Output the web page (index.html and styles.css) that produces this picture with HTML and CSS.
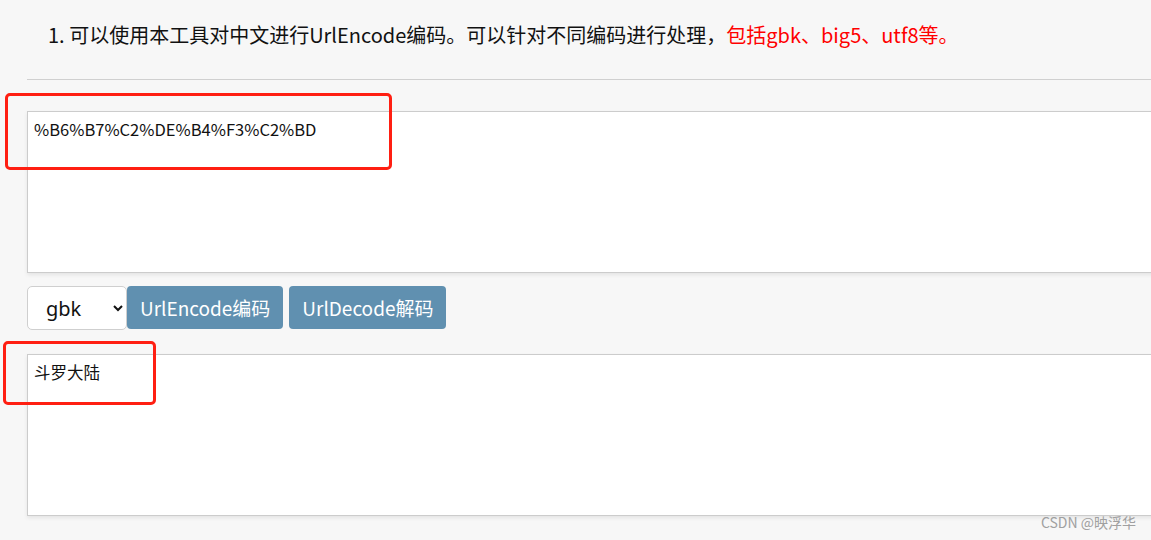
FILE: index.html
```html
<!DOCTYPE html>
<html lang="zh-CN">
<head>
<meta charset="utf-8">
<title>UrlEncode</title>
<link rel="stylesheet" href="styles.css">
</head>
<body>
<div class="page">
  <p class="intro">1. 可以使用本工具对中文进行UrlEncode编码。可以针对不同编码进行处理，<span class="hl">包括gbk、big5、utf8等。</span></p>
  <div class="rule"></div>
  <textarea class="box box-top" readonly>%B6%B7%C2%DE%B4%F3%C2%BD</textarea>
  <div class="controls">
    <select class="enc">
      <option>gbk</option>
      <option>big5</option>
      <option>utf8</option>
    </select>
    <button class="btn">UrlEncode编码</button>
    <button class="btn">UrlDecode解码</button>
  </div>
  <textarea class="box box-bottom" readonly>斗罗大陆</textarea>
  <div class="mark mark-1"></div>
  <div class="mark mark-2"></div>
  <div class="watermark">CSDN @映浮华</div>
</div>
</body>
</html>
```

FILE: styles.css
```css
html, body {
  margin: 0;
  padding: 0;
  background: #f7f7f7;
  overflow: hidden;
}
.page {
  position: relative;
  width: 1151px;
  height: 540px;
  overflow: hidden;
  font-family: "Noto Sans CJK SC", "Noto Sans", sans-serif;
  color: #111;
}
.intro {
  margin: 0;
  padding: 21px 0 0 48px;
  font-size: 20px;
  line-height: 28px;
  height: 56px;
  box-sizing: border-box;
  white-space: nowrap;
}
.hl { color: #f00; }
.rule {
  margin: 23px 0 0 27px;
  height: 0;
  border-top: 1px solid #d0d0d0;
}
.box {
  display: block;
  margin-left: 27px;
  width: 1160px;
  height: 162px;
  box-sizing: border-box;
  border: 1px solid #cccccc;
  background: #fff;
  resize: none;
  outline: none;
  padding: 6px 6px;
  font-family: "Noto Sans CJK SC", "Noto Sans", sans-serif;
  font-size: 16.5px;
  line-height: 22px;
  color: #111;
  box-shadow: 0 2px 4px rgba(0,0,0,0.08);
}
.box-top { margin-top: 31px; }
.box-bottom { margin-top: 24px; }
.controls {
  display: flex;
  align-items: flex-start;
  margin: 13px 0 0 27px;
}
.enc {
  width: 100px;
  height: 44px;
  box-sizing: border-box;
  border: 1px solid #cfcfcf;
  border-radius: 5px;
  background: #fff;
  font-family: "Noto Sans", sans-serif;
  font-size: 20px;
  color: #111;
  padding: 0 0 0 14px;
}
.btn {
  height: 43px;
  box-sizing: border-box;
  border: none;
  border-radius: 4px;
  background: #6090b0;
  color: #fff;
  font-family: "Noto Sans CJK SC", "Noto Sans", sans-serif;
  font-size: 19px;
  padding: 0 13px;
  margin-right: 6px;
}
.mark {
  position: absolute;
  border: 3px solid #ff1f12;
  border-radius: 5px;
  box-sizing: border-box;
}
.mark-1 { left: 5px; top: 93px; width: 387px; height: 77px; }
.mark-2 { left: 3px; top: 341px; width: 153px; height: 64px; }
.watermark {
  position: absolute;
  right: 15px;
  bottom: 8px;
  font-family: "Noto Sans CJK SC", "Liberation Sans", sans-serif;
  font-size: 14px;
  color: #a0a0a0;
}
```
